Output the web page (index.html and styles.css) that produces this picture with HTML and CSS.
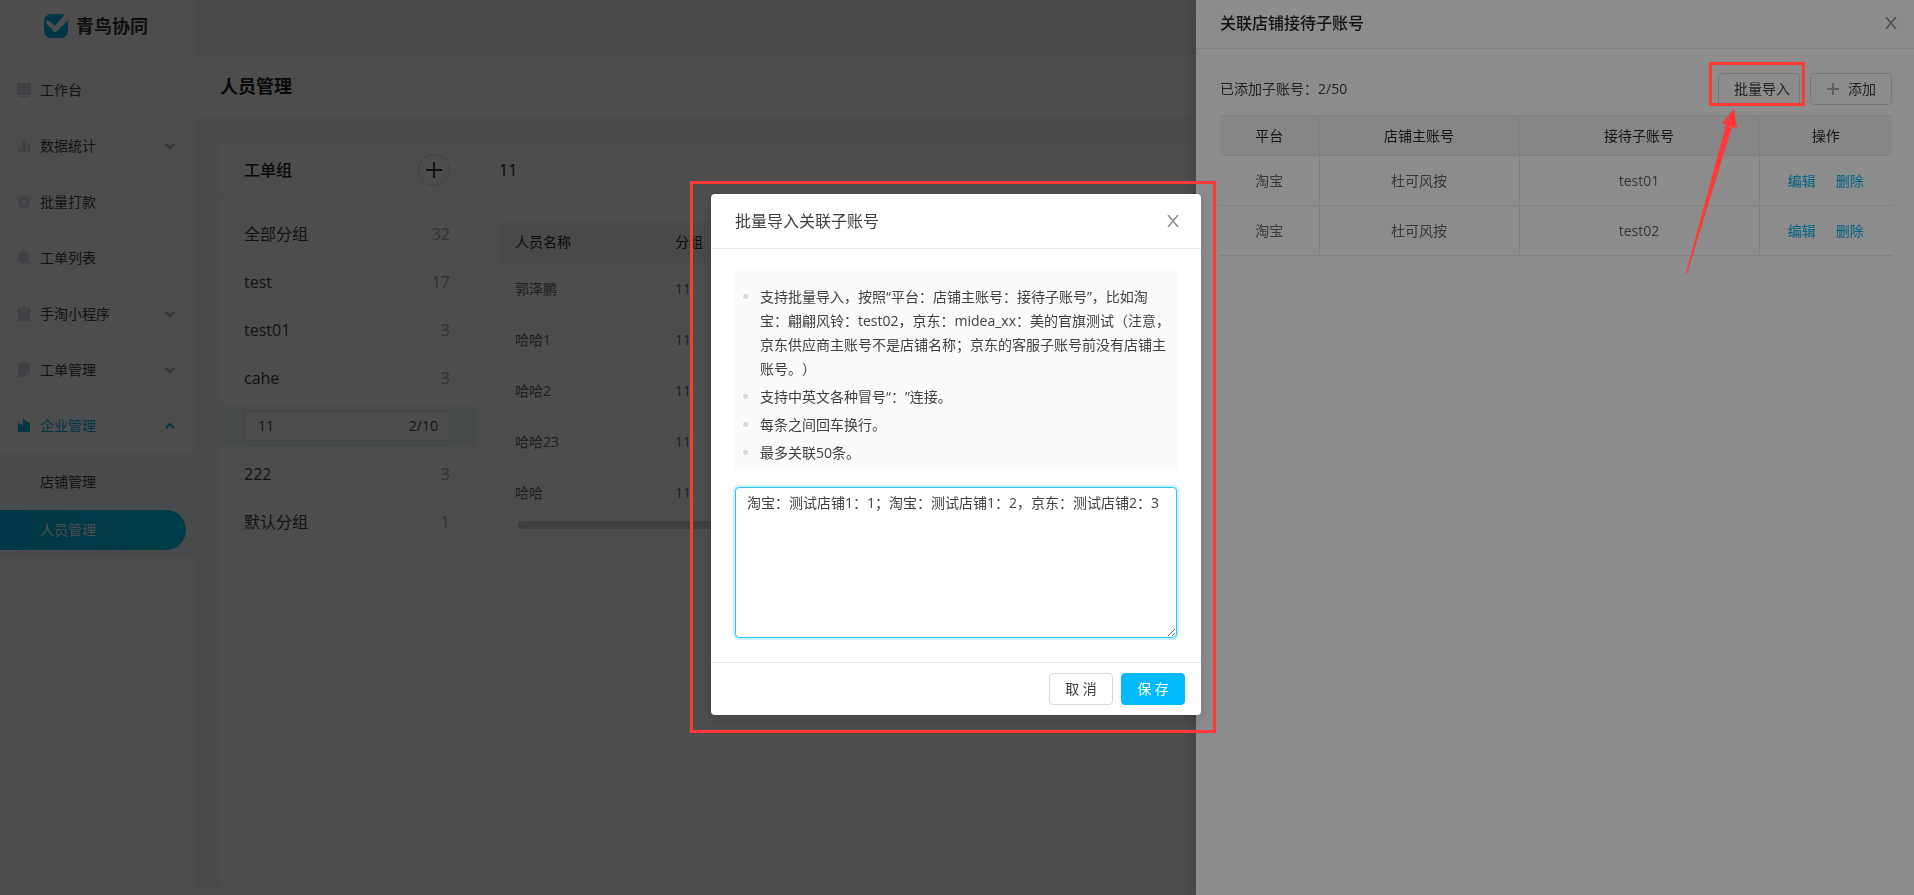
FILE: index.html
```html
<!DOCTYPE html>
<html lang="zh-CN">
<head>
<meta charset="utf-8">
<title>人员管理</title>
<link rel="stylesheet" href="styles.css">
</head>
<body>
<div class="app">
  <aside class="sidebar">
    <div class="brand">
      <svg class="brand-logo" viewBox="0 0 24 24" aria-hidden="true">
        <rect width="24" height="24" rx="7" fill="#00b4e6"/>
        <path d="M4 8.500l7 6.500" stroke="#fff" stroke-width="4" stroke-linecap="round" fill="none"/>
        <path d="M20.500 1L24 3v3.500L12.500 17.500a2.500 2.500 0 0 1-3.500-3.500z" fill="#fff"/>
      </svg>
      <span>青鸟协同</span>
    </div>
    <nav class="menu">
      <a class="menu-item" href="#">
        <svg class="menu-icon" viewBox="0 0 14 14"><rect width="14" height="12" rx="1"/><rect x="2" y="13" width="10" height="1"/></svg>
        <span>工作台</span>
      </a>
      <a class="menu-item" href="#">
        <svg class="menu-icon" viewBox="0 0 14 14"><path d="M1 8h3v5H1zM5 1h4v12H5zM10 4h3v9h-3z"/></svg>
        <span>数据统计</span>
        <svg class="chevron" viewBox="0 0 10 6"><path d="M1 1l4 4 4-4"/></svg>
      </a>
      <a class="menu-item" href="#">
        <svg class="menu-icon" viewBox="0 0 14 14"><circle cx="7" cy="7" r="6.500"/><path class="menu-icon-cut" d="M4.500 3.500L7 6.500l2.500-3M7 6.500v4M4.500 6.800h5M4.500 8.800h5"/></svg>
        <span>批量打款</span>
      </a>
      <a class="menu-item" href="#">
        <svg class="menu-icon" viewBox="0 0 14 14"><circle cx="6.500" cy="6.500" r="6"/><path class="menu-icon-line" d="M10.500 10.500l3 3"/></svg>
        <span>工单列表</span>
      </a>
      <a class="menu-item" href="#">
        <svg class="menu-icon" viewBox="0 0 14 14"><path d="M2 1h1.500v3h7V1H12a1 1 0 0 1 1 1v11a1 1 0 0 1-1 1H2a1 1 0 0 1-1-1V2a1 1 0 0 1 1-1zM4.500 0h5v3h-5z"/></svg>
        <span>手淘小程序</span>
        <svg class="chevron" viewBox="0 0 10 6"><path d="M1 1l4 4 4-4"/></svg>
      </a>
      <a class="menu-item" href="#">
        <svg class="menu-icon" viewBox="0 0 14 14"><path d="M2 0h10a1 1 0 0 1 1 1v8H9v5H2a1 1 0 0 1-1-1V1a1 1 0 0 1 1-1zM10 10h3l-3 3.500z"/></svg>
        <span>工单管理</span>
        <svg class="chevron" viewBox="0 0 10 6"><path d="M1 1l4 4 4-4"/></svg>
      </a>
      <a class="menu-item menu-item-open" href="#">
        <svg class="menu-icon" viewBox="0 0 14 14"><path d="M1 4l5 2V0l7 4v9H1z"/></svg>
        <span>企业管理</span>
        <svg class="chevron" viewBox="0 0 10 6"><path d="M1 5l4-4 4 4"/></svg>
      </a>
      <div class="submenu">
        <a class="submenu-item" href="#">店铺管理</a>
        <a class="submenu-item submenu-item-active" href="#">人员管理</a>
      </div>
    </nav>
  </aside>

  <main class="main">
    <div class="topbar"></div>
    <header class="page-head"><h1>人员管理</h1></header>
    <div class="content">
      <section class="groups">
        <div class="panel-head">
          <h2>工单组</h2>
          <button class="add-group" type="button" aria-label="新增分组">
            <svg viewBox="0 0 16 16"><path d="M8 0v16M0 8h16"/></svg>
          </button>
        </div>
        <ul class="group-list">
          <li><span>全部分组</span><span class="count">32</span></li>
          <li><span>test</span><span class="count">17</span></li>
          <li><span>test01</span><span class="count">3</span></li>
          <li><span>cahe</span><span class="count">3</span></li>
          <li class="group-editing">
            <label class="group-field"><input type="text" value="11" aria-label="分组名称"><span>2/10</span></label>
          </li>
          <li><span>222</span><span class="count">3</span></li>
          <li><span>默认分组</span><span class="count">1</span></li>
        </ul>
      </section>
      <section class="members">
        <div class="panel-head"><h2>11</h2></div>
        <div class="members-body">
          <table class="member-table">
            <thead><tr><th class="col-name">人员名称</th><th>分组</th></tr></thead>
            <tbody>
              <tr><td>郭泽鹏</td><td>11</td></tr>
              <tr><td>哈哈1</td><td>11</td></tr>
              <tr><td>哈哈2</td><td>11</td></tr>
              <tr><td>哈哈23</td><td>11</td></tr>
              <tr><td>哈哈</td><td>11</td></tr>
            </tbody>
          </table>
          <div class="scroll-thumb"></div>
        </div>
      </section>
    </div>
  </main>
</div>

<div class="mask"></div>

<aside class="drawer">
  <header class="drawer-head">
    <h2>关联店铺接待子账号</h2>
    <button class="close" type="button" aria-label="关闭"><svg viewBox="0 0 12 12"><path d="M1 0l10 12M11 0L1 12"/></svg></button>
  </header>
  <div class="drawer-body">
    <div class="toolbar">
      <span class="toolbar-text">已添加子账号：2/50</span>
      <button class="btn btn-import" type="button">批量导入</button>
      <button class="btn btn-add" type="button"><svg viewBox="0 0 12 12"><path d="M6 0v12M0 6h12"/></svg>添加</button>
    </div>
    <table class="account-table">
      <colgroup><col class="w-platform"><col class="w-main"><col class="w-sub"><col class="w-action"></colgroup>
      <thead><tr><th>平台</th><th>店铺主账号</th><th>接待子账号</th><th>操作</th></tr></thead>
      <tbody>
        <tr><td>淘宝</td><td>杜可风按</td><td>test01</td><td><div class="actions"><a href="#">编辑</a><a href="#">删除</a></div></td></tr>
        <tr><td>淘宝</td><td>杜可风按</td><td>test02</td><td><div class="actions"><a href="#">编辑</a><a href="#">删除</a></div></td></tr>
      </tbody>
    </table>
  </div>
</aside>

<div class="mask"></div>

<svg class="callout" viewBox="0 0 240 230" aria-hidden="true">
  <rect x="36.500" y="13.500" width="93" height="41"/>
  <path d="M60 59l-12 14 4 2-40 148 1 1L58 77l5 1z"/>
</svg>

<div class="modal-wrap">
  <div class="modal" role="dialog" aria-labelledby="modal-title">
    <header class="modal-head">
      <h2 id="modal-title">批量导入关联子账号</h2>
      <button class="close" type="button" aria-label="关闭"><svg viewBox="0 0 12 12"><path d="M1 0l10 12M11 0L1 12"/></svg></button>
    </header>
    <div class="modal-body">
      <ul class="notes">
        <li>支持批量导入，按照“平台：店铺主账号：接待子账号”，比如淘宝：翩翩风铃：test02，京东：midea_xx：美的官旗测试（注意，京东供应商主账号不是店铺名称；京东的客服子账号前没有店铺主账号。）</li>
        <li>支持中英文各种冒号“：”连接。</li>
        <li>每条之间回车换行。</li>
        <li>最多关联50条。</li>
      </ul>
      <textarea class="import-text" aria-label="批量导入内容">淘宝：测试店铺1：1；淘宝：测试店铺1：2，京东：测试店铺2：3</textarea>
    </div>
    <footer class="modal-foot">
      <button class="btn" type="button">取 消</button>
      <button class="btn btn-primary" type="button">保 存</button>
    </footer>
    <div class="modal-frame"></div>
  </div>
</div>
</body>
</html>
```

FILE: styles.css
```css
* { box-sizing: border-box; }

body {
  margin: 0;
  font: 14px/22px "Open Sans", "Noto Sans CJK SC", sans-serif;
  color: #404040;
  text-spacing-trim: space-all;
  overflow: hidden;
}

h1, h2, ul { margin: 0; padding: 0; }
ul { list-style: none; }
a { color: inherit; text-decoration: none; }
button, input, textarea { font: inherit; color: inherit; }
table { border-collapse: collapse; border-spacing: 0; }

.app {
  display: flex;
  height: 100vh;
  background: #fff;
}

/* Sidebar */
.sidebar {
  flex: none;
  width: 197px;
  border-right: 1px solid #f0f0f0;
}
.brand {
  display: flex;
  align-items: center;
  gap: 8px;
  height: 62px;
  padding: 0 0 10px 44px;
  font-size: 18px;
  font-weight: 700;
  color: #333;
}
.brand-logo { width: 24px; height: 24px; }
.menu-item {
  display: flex;
  align-items: center;
  height: 56px;
  padding: 0 21px 0 17px;
  gap: 9px;
}
.menu-icon {
  width: 14px;
  height: 14px;
  fill: #cfd8e3;
}
.menu-icon-cut { fill: none; stroke: #fff; }
.menu-icon-line { stroke: #cfd8e3; stroke-width: 2; }
.chevron {
  width: 10px;
  height: 6px;
  margin-left: auto;
  fill: none;
  stroke: #a0a0a0;
  stroke-width: 2;
}
.menu-item-open { color: #00b4e6; }
.menu-item-open .menu-icon { fill: #00b4e6; }
.menu-item-open .chevron { stroke: #00b4e6; }
.submenu {
  padding-bottom: 8px;
  background: #f2f5fa;
}
.submenu-item {
  display: flex;
  align-items: center;
  height: 56px;
  padding-left: 40px;
}
.submenu-item-active {
  height: 40px;
  margin-right: 10px;
  border-radius: 0 20px 20px 0;
  background: linear-gradient(90deg, #00b4e6, #00c8f0);
  color: #fff;
}

/* Main area */
.main {
  flex: 1;
  min-width: 0;
  display: flex;
  flex-direction: column;
}
.topbar { height: 54px; background: #f4f7fb; }
.page-head {
  height: 64px;
  padding: 21px 23px;
  border-bottom: 1px solid #f0f0f0;
}
.page-head h1 { font-size: 18px; line-height: 22px; color: #222; }
.content {
  flex: 1;
  display: flex;
  padding: 24px 24px 0 23px;
  margin-bottom: 7px;
  border-bottom: 1px solid #f0f0f0;
  background: #f9f9f9;
}
.groups {
  flex: none;
  width: 255px;
  border-right: 1px solid #f0f0f0;
  background: #fff;
}
.members {
  flex: 1;
  min-width: 0;
  background: #fff;
}
.panel-head {
  display: flex;
  align-items: center;
  justify-content: space-between;
  height: 56px;
  padding: 0 24px;
  border-bottom: 1px solid #f0f0f0;
}
.panel-head h2 { font-size: 16px; font-weight: 500; color: #222; }
.add-group {
  display: flex;
  align-items: center;
  justify-content: center;
  width: 32px;
  height: 32px;
  padding: 0;
  border: 1px solid #d9d9d9;
  border-radius: 50%;
  background: none;
}
.add-group svg { width: 16px; height: 16px; stroke: #404040; stroke-width: 2; }
.group-list {
  display: flex;
  flex-direction: column;
  gap: 8px;
  padding-top: 16px;
  font-size: 16px;
}
.group-list li {
  display: flex;
  align-items: center;
  justify-content: space-between;
  height: 40px;
  padding: 0 24px;
}
.group-list .count { color: #a6a6a6; }
.group-list .group-editing { background: #eef7fa; }
.group-field {
  flex: 1;
  display: flex;
  min-width: 0;
  align-items: center;
  height: 30px;
  padding: 0 11px 0 13px;
  border: 1px solid #d9d9d9;
  background: #fff;
  font-size: 14px;
}
.group-field input {
  flex: 1;
  min-width: 0;
  padding: 0;
  border: 0;
  outline: 0;
  background: none;
}
.members-body { padding: 24px; }
.member-table { width: 100%; color: #666; }
.member-table th {
  height: 41px;
  padding: 0 16px;
  border-bottom: 1px solid #f0f0f0;
  background: #f2f2f2;
  font-weight: 400;
  text-align: left;
  color: #222;
}
.member-table .col-name { width: 160px; }
.member-table td {
  height: 51px;
  padding: 0 16px;
  border-bottom: 1px solid #f0f0f0;
}
.scroll-thumb {
  height: 8px;
  margin: 2px 0 0 19px;
  border-radius: 4px;
  background: #d0d0d0;
}

/* Overlays */
.mask {
  position: fixed;
  inset: 0;
  background: rgba(0, 0, 0, 0.45);
}
.close {
  display: flex;
  padding: 0;
  border: 0;
  background: none;
}
.close svg { width: 12px; height: 12px; stroke: #8c8c8c; stroke-width: 1.5; }
.btn {
  height: 32px;
  padding: 0 15px;
  border: 1px solid #d9d9d9;
  border-radius: 4px;
  background: #fff;
  white-space: nowrap;
}
.btn-primary {
  border-color: #00b9ff;
  background: #00b9ff;
  color: #fff;
}

/* Drawer */
.drawer {
  position: fixed;
  inset: 0 0 0 auto;
  width: 718px;
  background: #fff;
  box-shadow: -4px 0 12px rgba(0, 0, 0, 0.15);
}
.drawer-head {
  display: flex;
  align-items: center;
  justify-content: space-between;
  height: 49px;
  padding: 0 17px 2px 24px;
  border-bottom: 1px solid #e8e8e8;
}
.drawer-head h2 { font-size: 16px; font-weight: 500; color: #262626; }
.drawer-body { padding: 24px 22px 24px 24px; }
.toolbar {
  display: flex;
  align-items: center;
  gap: 10px;
  margin-bottom: 10px;
}
.toolbar-text { margin-right: auto; }
.btn-import { width: 82px; padding-right: 9px; }
.btn-add {
  display: flex;
  align-items: center;
  justify-content: space-between;
  width: 82px;
}
.btn-add svg { width: 14px; height: 12px; stroke: #b0b0b0; stroke-width: 2; }
.account-table {
  width: 100%;
  table-layout: fixed;
  text-align: center;
  color: #666;
}
.account-table .w-platform { width: 99px; }
.account-table .w-main { width: 200px; }
.account-table .w-sub { width: 240px; }
.account-table th, .account-table td {
  padding: 0;
  border: 1px solid #e8e8e8;
}
.account-table th:first-child, .account-table td:first-child { border-left: 0; }
.account-table th:last-child, .account-table td:last-child { border-right: 0; }
.account-table th {
  height: 40px;
  background: #f4f4f4;
  font-weight: 400;
  color: #262626;
}
.account-table td { height: 50px; }
.actions { display: flex; justify-content: center; gap: 20px; color: #00b4f5; }

/* Callout marks */
.callout {
  position: fixed;
  top: 50px;
  right: 0;
  width: 240px;
  height: 230px;
  fill: #ff3838;
}
.callout rect { fill: none; stroke: #ff3838; stroke-width: 3; }
.modal-frame {
  position: absolute;
  inset: -13px -15px -18px -21px;
  border: 3px solid #ff3838;
  pointer-events: none;
}

/* Modal */
.modal-wrap {
  position: fixed;
  inset: 0;
  display: flex;
  align-items: flex-start;
  justify-content: center;
  padding: 194px 2px 0 0;
}
.modal {
  position: relative;
  width: 490px;
  border-radius: 4px;
  background: #fff;
  box-shadow: 0 4px 12px rgba(0, 0, 0, 0.15);
}
.modal-head {
  display: flex;
  align-items: center;
  justify-content: space-between;
  height: 55px;
  padding: 0 22px 0 24px;
  border-bottom: 1px solid #e8e8e8;
}
.modal-head h2 { font-size: 16px; font-weight: 400; }
.modal-body { padding: 22px 24px 24px; }
.notes {
  display: flex;
  flex-direction: column;
  gap: 4px;
  margin-bottom: 16px;
  padding: 14px 4px 6px 8px;
  background: #fafafa;
  line-height: 24px;
}
.notes li { display: flex; }
.notes li::before {
  content: "";
  flex: none;
  width: 5px;
  height: 5px;
  margin: 9px 12px 0 0;
  border-radius: 50%;
  background: #d9d9d9;
}
.import-text {
  display: block;
  width: 100%;
  height: 151px;
  padding: 4px 11px;
  border: 1px solid #29c6ff;
  border-radius: 4px;
  outline: 0;
  box-shadow: 0 0 0 2px rgba(0, 185, 255, 0.2);
  resize: vertical;
}
.modal-foot {
  display: flex;
  justify-content: flex-end;
  gap: 8px;
  padding: 10px 16px;
  border-top: 1px solid #e8e8e8;
}
.modal-foot .btn { width: 64px; padding: 0; }
```
